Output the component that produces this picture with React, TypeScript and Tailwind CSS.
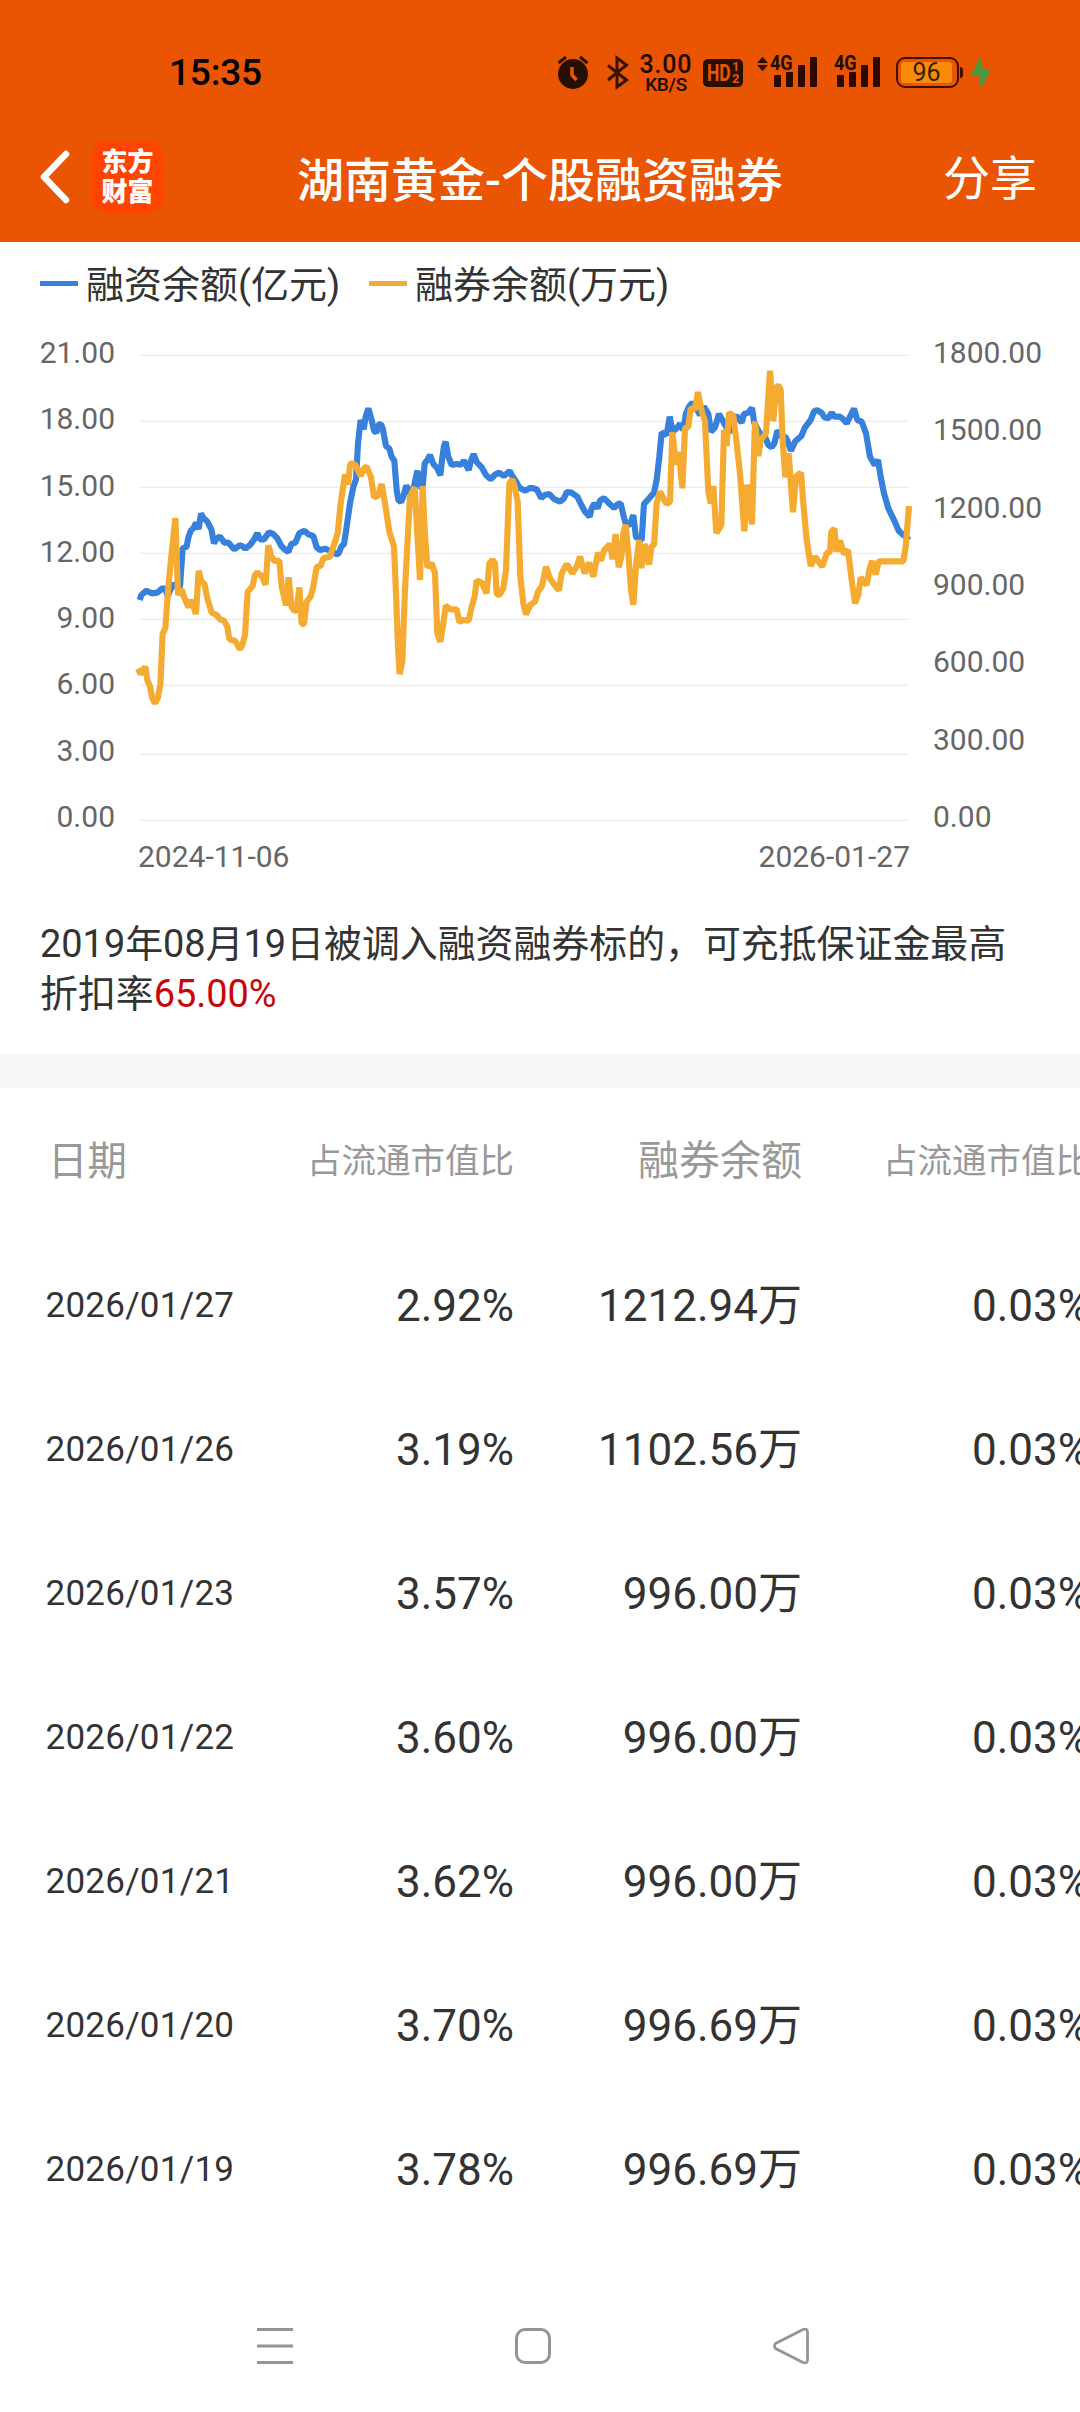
import { Fragment } from "react"

type Chunk = { start: number; points: string }

// Plot units are thirds of a pixel; each chunk is offset by its own start
const marginBalance: Chunk[] = [
  {
    start: 0,
    points:
      "59,780 64,765 79,752 95,760 112,758 127,745 136,747 143,768 155,740 162,732 172,742 180,740 188,625 200,620 205,592 212,573 222,562 228,548 236,567 243,520 249,532 262,545 274,568 282,610 290,595 300,590 313,608 325,608 343,628 358,616 366,618 376,626 390,615 400,602 412,580 420,598 432,598 447,577 460,582 472,595 484,618 496,630 505,636 514,612 526,608 538,580 553,572 565,583 580,588 590,622 600,630 615,626 625,630 640,636 649,643 656,640 664,620 672,612 680,560 690,490 700,440 708,418 714,310 722,240 731,268 737,230 745,205 755,240 762,272 769,278 775,255 783,252",
  },
  {
    start: 780,
    points:
      "8,265 18,318 28,326 35,350 43,362 50,450 55,480 63,486 70,470 79,437 90,460 102,440 112,392 118,440 128,440 134,370 142,360 150,345 160,372 172,385 181,406 186,360 192,318 197,305 205,350 215,375 230,372 242,374 252,362 266,390 272,365 281,342 290,366 305,382 318,405 332,418 345,404 358,398 372,408 389,393 395,405 407,422 418,443 436,452 452,443 470,448 484,474 496,464 508,462 522,477 540,485 552,475 560,456 575,458 592,470 604,495 615,515 629,530 635,505 643,490 653,505 660,482 672,474 685,488 702,504 714,492 722,490 730,525 737,550 750,555 760,525 768,592 784,600",
  },
  {
    start: 1560,
    points:
      "5,600 12,492 30,472 42,458 50,420 58,350 65,278 80,284 89,230 98,275 110,265 120,252 130,270 138,220 147,200 157,188 166,200 180,225 192,200 205,222 213,275 225,262 237,222 250,245 268,278 280,235 290,228 305,248 312,222 325,218 336,204 343,250 360,280 375,290 385,315 395,322 403,310 412,272 425,290 438,292 445,310 453,332 465,305 484,288 495,262 512,240 522,215 530,210 545,218 553,232 565,235 575,218 583,230 600,230 610,238 620,250 630,230 642,206 652,240 665,245 678,280 690,350 704,375 714,360 722,410 732,460 745,505 762,540 776,572 790,585 808,600",
  },
]

const shortBalance: Chunk[] = [
  {
    start: 0,
    points:
      "54,986 62,1002 76,980 82,1020 90,1040 97,1075 105,1090 113,1075 121,1035 128,880 136,865 145,740 155,640 166,534 174,765 184,748 193,772 205,802 214,780 228,822 236,692 244,725 253,730 262,775 275,818 290,825 300,838 312,842 322,860 328,898 345,902 360,928 367,915 375,885 383,755 398,738 405,705 412,697 425,708 437,734 445,616 454,650 464,663 478,662 485,740 498,796 506,712 515,800 523,812 530,812 538,742 545,852 552,852 560,785 572,770 580,740 590,680 602,678 610,655 630,650 640,620 653,580 662,490 675,404 684,434 690,375 697,368 708,378 722,408 732,385 740,380 753,412 762,472 773,468 785,432",
  },
  {
    start: 780,
    points:
      "15,490 28,575 42,620 48,760 54,920 59,1002 67,965 75,750 85,560 90,470 104,442 120,720 128,438 134,570 142,682 155,670 165,700 172,880 181,905 190,850 197,797 210,808 230,808 238,846 250,840 266,842 275,800 284,770 290,722 305,728 320,760 328,670 338,660 345,670 350,760 357,767 370,745 378,690 388,430 397,418 404,440 413,485 421,710 430,790 438,824 450,795 465,785 474,755 486,738 498,680 510,715 522,733 537,751 545,700 560,672 577,700 590,680 600,650 614,700 627,668 640,710 654,638 663,662 672,632 690,612 698,658 707,582 716,682 724,650 730,580 737,554 745,640 753,750 760,794 768,680 777,600",
  },
  {
    start: 1560,
    points:
      "4,684 14,612 27,674 35,618 42,615 50,490 60,455 70,475 80,492 90,485 97,276 108,374 117,336 127,445 135,265 145,260 152,205 165,208 174,156 183,205 195,245 205,455 212,490 220,438 229,579 244,555 252,270 260,318 267,218 280,228 290,310 300,400 313,574 321,434 336,553 345,244 355,348 362,300 378,280 390,92 400,244 408,145 415,135 422,150 428,300 436,412 446,340 459,517 468,410 483,398 490,490 500,600 512,678 525,650 547,680 560,640 570,635 574,575 583,566 590,635 600,602 612,642 624,630 635,720 645,790 655,765 662,712 680,735 688,690 696,663 707,704 716,664 790,664 797,620 807,498",
  },
]

const toPoints = (chunks: Chunk[]) =>
  chunks
    .flatMap((chunk) =>
      chunk.points.split(" ").map((p) => {
        const [x, y] = p.split(",").map(Number)
        return `${x + chunk.start},${y}`
      })
    )
    .join(" ")

const gridLines = [46, 244, 442, 640, 838, 1036, 1243, 1441]
const leftTicks = ["21.00", "18.00", "15.00", "12.00", "9.00", "6.00", "3.00", "0.00"]
const rightTicks = ["1800.00", "1500.00", "1200.00", "900.00", "600.00", "300.00", "0.00"]

const rows = [
  { date: "2026/01/27", ratio: "2.92%", amount: "1212.94万", shortRatio: "0.03%" },
  { date: "2026/01/26", ratio: "3.19%", amount: "1102.56万", shortRatio: "0.03%" },
  { date: "2026/01/23", ratio: "3.57%", amount: "996.00万", shortRatio: "0.03%" },
  { date: "2026/01/22", ratio: "3.60%", amount: "996.00万", shortRatio: "0.03%" },
  { date: "2026/01/21", ratio: "3.62%", amount: "996.00万", shortRatio: "0.03%" },
  { date: "2026/01/20", ratio: "3.70%", amount: "996.69万", shortRatio: "0.03%" },
  { date: "2026/01/19", ratio: "3.78%", amount: "996.69万", shortRatio: "0.03%" },
]

function SignalBars() {
  return (
    <svg width="43" height="30" viewBox="0 0 43 30" fill="#2c0800">
      <rect x="0" y="18" width="7" height="12" rx="1" />
      <rect x="12" y="15" width="7" height="15" rx="1" />
      <rect x="24" y="8" width="7" height="22" rx="1" />
      <rect x="36" y="0" width="7" height="30" rx="1" />
    </svg>
  )
}

function StatusBar() {
  return (
    <div className="flex h-[112px] items-start pl-[169px] pt-[53px] text-[#200800]">
      <div className="w-[388px] text-[37px] font-medium leading-[40px] tracking-[-0.200px] text-black">15:35</div>

      <svg className="mt-[2px]" width="32" height="35" viewBox="0 0 32 35">
        <circle cx="16" cy="19" r="15" fill="#281000" />
        <path d="M1.500 8 9 2M30.500 8 23 2" stroke="#281000" strokeWidth="3" />
        <path d="M15 12v8l4.500 5" fill="none" stroke="#ea5504" strokeWidth="3.500" />
      </svg>

      <svg className="ml-[18px] mt-[2px]" width="22" height="35" viewBox="0 0 22 35" fill="none" stroke="#3a1000" strokeWidth="3">
        <path d="M1 10.500 19.500 25 10 32V3l9.500 7L1 25" />
      </svg>

      <div className="ml-[10px] flex w-[54px] flex-col items-center font-medium">
        <span className="text-[25px] leading-[24px] tracking-[0.800px]">3.00</span>
        <span className="text-[19px] leading-[16px] tracking-[-0.300px]">KB/S</span>
      </div>

      <div className="ml-[10px] mt-[6px] flex h-[28px] w-[40px] items-center rounded-[5px] bg-[#281000] pl-[4px] text-[#ea5504]">
        <span className="w-[25px] origin-left scale-x-[0.76] text-[23px] font-bold leading-none">HD</span>
        <span className="flex flex-col text-[13px] font-bold leading-[12px]">
          <span>1</span>
          <span>2</span>
        </span>
      </div>

      <div className="relative ml-[14px] mt-[4px] flex w-[60px] justify-end">
        <svg className="absolute left-0 top-0" width="11" height="14" viewBox="0 0 11 14" fill="#2c0800">
          <path d="M5.500 0 11 6H0zM5.500 14 0 8h11z" />
        </svg>
        <span className="absolute left-[13px] top-[-4px] origin-left scale-x-[0.86] text-[21px] font-bold leading-[20px]">4G</span>
        <SignalBars />
      </div>

      <div className="relative ml-[17px] mt-[4px] flex w-[46px] justify-end">
        <span className="absolute left-0 top-[-4px] origin-left scale-x-[0.86] text-[21px] font-bold leading-[20px]">4G</span>
        <SignalBars />
      </div>

      <div className="ml-[16px] mt-[4px] flex h-[31px] w-[63px] items-center rounded-[9px] border-[2.500px] border-[#4a0c00] p-[3px]">
        <div className="flex h-full w-[51px] items-center justify-center rounded-[3px] bg-[#f98b0b] text-[25px] leading-none text-[#3a2000]">
          96
        </div>
      </div>
      <div className="ml-[1px] mt-[14px] h-[11px] w-[3px] rounded-r-sm bg-[#4a0c00]" />

      <svg className="ml-[8px] mt-[4px]" width="20" height="32" viewBox="0 0 20 32">
        <path d="M9.500 0 0 18h8l2 14L20 12h-8z" fill="#4a9a42" />
      </svg>
    </div>
  )
}

function TitleBar() {
  return (
    <div className="flex h-[130px] items-center pl-[36px] text-white">
      <svg width="36" height="56" viewBox="0 0 36 56" fill="none" stroke="#fff" strokeWidth="6.500" strokeLinecap="round" strokeLinejoin="round">
        <path d="M30 5 8 28l22 23" />
      </svg>
      <div className="ml-[20px] flex h-[72px] w-[71px] flex-col items-center justify-center rounded-[15px] bg-[#ff4400] text-[26px] font-black leading-[30px]">
        <span>东方</span>
        <span>财富</span>
      </div>
      <h1 className="ml-[134px] whitespace-nowrap pt-[8px] text-[47px] font-medium">湖南黄金-个股融资融券</h1>
      <button className="ml-auto mr-[43px] whitespace-nowrap pt-[4px] text-[47px]">分享</button>
    </div>
  )
}

function Chart() {
  return (
    <section className="pt-[12px]">
      <div className="flex h-[58px] items-center pl-[40px] text-[38px] text-[#333]">
        <span className="h-[5px] w-[38px] bg-[#3781d9]" />
        <span className="ml-[8px] w-[283px] whitespace-nowrap pt-[4px]">融资余额(亿元)</span>
        <span className="h-[5px] w-[38px] bg-[#f0ab3c]" />
        <span className="ml-[8px] whitespace-nowrap pt-[4px]">融券余额(万元)</span>
      </div>

      <div className="mt-[26px] flex h-[494px] text-[30px] leading-[30px] text-[#666]">
        <div className="flex w-[115px] flex-col justify-between text-right">
          {leftTicks.map((tick) => (
            <span key={tick}>{tick}</span>
          ))}
        </div>
        <svg className="ml-[17px] mt-[2px]" width="786" height="490" viewBox="36 0 2358 1470">
          {gridLines.map((y) => (
            <line key={y} x1="59" x2="2367" y1={y} y2={y} stroke="#ececec" strokeWidth="4" />
          ))}
          <g fill="none" strokeWidth="18.500" strokeLinejoin="bevel">
            <polyline points={toPoints(marginBalance)} stroke="#3781dc" />
            <polyline points={toPoints(shortBalance)} stroke="#f5ab32" />
          </g>
        </svg>
        <div className="ml-[15px] flex flex-col justify-between">
          {rightTicks.map((tick) => (
            <span key={tick}>{tick}</span>
          ))}
        </div>
      </div>
      <div className="mt-[10px] flex justify-between pl-[138px] pr-[170px] text-[30px] leading-[30px] text-[#666]">
        <span>2024-11-06</span>
        <span>2026-01-27</span>
      </div>
    </section>
  )
}

function HistoryTable() {
  return (
    <section className="grid grid-cols-[225px_289px_288px_288px] overflow-hidden text-right text-[44px] text-[#333]">
      <div className="flex h-[146px] items-center pl-[48px] pt-[2px] text-[39.500px] text-[#999]">日期</div>
      <div className="flex h-[146px] items-center justify-end pt-[2px] text-[34.500px] text-[#999]">占流通市值比</div>
      <div className="flex h-[146px] items-center justify-end pt-[2px] text-[41px] text-[#999]">融券余额</div>
      <div className="flex h-[146px] items-center justify-end pt-[2px] text-[34.500px] text-[#999]">占流通市值比</div>
      {rows.map((row) => (
        <Fragment key={row.date}>
          <div className="flex h-[144px] items-center whitespace-nowrap pl-[45.500px] text-[35px] tracking-[0.250px]">{row.date}</div>
          <div className="flex h-[144px] items-center justify-end">{row.ratio}</div>
          <div className="flex h-[144px] items-center justify-end">{row.amount}</div>
          <div className="flex h-[144px] items-center justify-end">{row.shortRatio}</div>
        </Fragment>
      ))}
    </section>
  )
}

export default function App() {
  return (
    <div className="flex h-[2412px] w-[1080px] flex-col overflow-hidden bg-white font-['Roboto','Noto_Sans_CJK_SC',sans-serif]">
      <header className="h-[242px] shrink-0 bg-[#ea5504]">
        <StatusBar />
        <TitleBar />
      </header>
      <Chart />
      <p className="h-[182px] whitespace-nowrap pl-[40px] pt-[47px] text-[37.900px] leading-[50px] text-[#333]">
        2019年08月19日被调入融资融券标的，可充抵保证金最高
        <br />
        折扣率<span className="text-[#c8060a]">65.00%</span>
      </p>
      <div className="h-[34px] shrink-0 bg-[#f6f7f9]" />
      <HistoryTable />

      <nav className="mt-auto flex h-[132px] items-center justify-between px-[256px] pb-0">
        <svg width="37" height="36" viewBox="0 0 37 36" stroke="#949494" strokeWidth="3">
          <path d="M1 1.500h36M1 18h36M1 34.500h36" />
        </svg>
        <div className="h-[36px] w-[36px] rounded-[10px] border-[3px] border-[#949494]" />
        <svg width="51" height="36" viewBox="0 0 51 36" fill="none" stroke="#949494" strokeWidth="2.800" strokeLinejoin="round">
          <path d="M2.500 15.500 30 1.500Q34.500 0 34.500 4v28q0 4-4.500 2.500L2.500 20.500q-2-2.500 0-5z" />
        </svg>
      </nav>
    </div>
  )
}
